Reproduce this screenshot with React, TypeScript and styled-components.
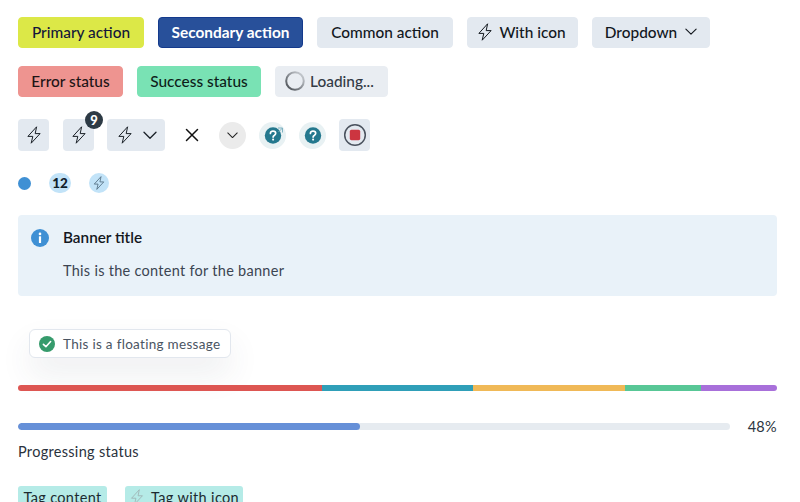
import React from "react";
import styled, { createGlobalStyle } from "styled-components";

const Global = createGlobalStyle`
  html, body { margin: 0; padding: 0; background: #fff; overflow: hidden; height: 502px; }
  body { font-family: "Lato", "Noto Sans", sans-serif; color: #12171d; -webkit-font-smoothing: antialiased; }
`;

const Page = styled.div`
  display: flex;
  flex-direction: column;
  padding: 17px 23px 0 18px;
  width: 759px;
`;

const Row = styled.div<{ $gap?: number; $mb: number }>`
  display: flex;
  align-items: center;
  gap: ${(p) => p.$gap ?? 14}px;
  margin-bottom: ${(p) => p.$mb}px;
`;

const variants: Record<string, string> = {
  primary: "background:#dce847;color:#14173a;border-color:#dce847;",
  secondary: "background:#28509a;color:#fff;border-color:#143a8c;font-weight:700;",
  common: "background:#e3e9f0;color:#12171d;border-color:#e3e9f0;",
  error: "background:#ee9490;color:#1e1416;border-color:#ee9490;",
  success: "background:#79e2b4;color:#0e1e1a;border-color:#79e2b4;",
  loading: "background:#e9edf2;color:#333b45;border-color:#e9edf2;",
};

const Button = styled.div<{ $v: keyof typeof variants; $w: number; $pr?: number; $gap?: number }>`
  box-sizing: border-box;
  display: flex;
  align-items: center;
  justify-content: center;
  gap: ${(p) => p.$gap ?? 5}px;
  width: ${(p) => p.$w}px;
  height: 31px;
  padding: 0 ${(p) => p.$pr ?? 0}px 2px 0;
  border: 1px solid;
  border-radius: 4px;
  font-size: 15.4px;
  font-weight: 500;
  white-space: nowrap;
  ${(p) => variants[p.$v]}
`;

const IconButton = styled.div<{ $w?: number; $ml?: number }>`
  position: relative;
  display: flex;
  align-items: center;
  justify-content: center;
  gap: 9px;
  width: ${(p) => p.$w ?? 31}px;
  height: 32px;
  margin-left: ${(p) => p.$ml ?? 0}px;
  border-radius: 4px;
  background: #e3e9f0;
  color: #1a2027;
`;

const Count = styled.span`
  position: absolute;
  top: -8px;
  right: -9px;
  box-sizing: border-box;
  width: 18px;
  height: 18px;
  border-radius: 50%;
  background: #2d3a45;
  color: #fff;
  font-size: 13px;
  font-weight: 900;
  display: flex;
  align-items: center;
  justify-content: center;
`;

const Plain = styled.div<{ $ml: number }>`
  display: flex;
  align-items: center;
  justify-content: center;
  width: 26px;
  height: 26px;
  margin-left: ${(p) => p.$ml}px;
`;

const Round = styled.div<{ $bg: string; $ml: number }>`
  display: flex;
  align-items: center;
  justify-content: center;
  width: 27px;
  height: 27px;
  margin-left: ${(p) => p.$ml}px;
  border-radius: 50%;
  background: ${(p) => p.$bg};
`;

const Dot = styled.span`
  width: 13px;
  height: 13px;
  border-radius: 50%;
  background: #3f90d4;
`;

const Pill = styled.span<{ $w: number }>`
  display: flex;
  align-items: center;
  justify-content: center;
  width: ${(p) => p.$w}px;
  height: 20px;
  border-radius: 10px;
  background: #c2e3f8;
  color: #10202c;
  font-size: 13.5px;
  font-weight: 900;
`;

const Banner = styled.div`
  box-sizing: border-box;
  height: 81px;
  border-radius: 4px;
  background: #e9f2f9;
  padding: 12px 13px;
  display: grid;
  grid-template-columns: 18px 1fr;
  column-gap: 14px;
  margin-bottom: 33px;
`;

const BannerIcon = styled.div`
  height: 18px;
  margin-top: 2px;
`;

const BannerTitle = styled.div`
  font-size: 15.3px;
  font-weight: 600;
  line-height: 20px;
  color: #14181d;
`;

const BannerText = styled.div`
  margin-top: 14px;
  font-size: 14.5px;
  line-height: 20px;
  color: #3c4552;
  letter-spacing: 0.28px;
`;

const Toast = styled.div`
  box-sizing: border-box;
  align-self: flex-start;
  margin-left: 11px;
  width: 202px;
  height: 29px;
  display: flex;
  align-items: center;
  gap: 8px;
  padding-left: 9px;
  border: 1px solid #e2e7ee;
  border-radius: 6px;
  background: #fff;
  font-size: 13.5px;
  color: #4a5462;
  letter-spacing: 0.3px;
  white-space: nowrap;
  box-shadow: 0 16px 32px rgba(60, 70, 90, 0.09);
  margin-bottom: 27px;
`;

const Stacked = styled.div`
  position: relative;
  display: flex;
  height: 6px;
  border-radius: 3px;
  overflow: hidden;
  margin-bottom: 31px;
`;

const Segment = styled.span<{ $w: number; $c: string }>`
  width: ${(p) => p.$w}px;
  background: ${(p) => p.$c};
`;

const ProgressRow = styled.div`
  display: flex;
  align-items: center;
  justify-content: space-between;
  height: 8px;
  margin-bottom: 12px;
`;

const Track = styled.div`
  width: 712px;
  height: 7px;
  border-radius: 4px;
  background: #e6ebf0;
  overflow: hidden;
`;

const Fill = styled.div`
  height: 100%;
  background: #6690d8;
  border-radius: 4px;
`;

const Percent = styled.span`
  font-size: 14.5px;
  color: #2c3540;
  letter-spacing: 0.3px;
`;

const Label = styled.div`
  font-size: 14.5px;
  line-height: 20px;
  color: #2a323c;
  letter-spacing: 0.3px;
  margin-bottom: 24px;
`;

const Tag = styled.div<{ $w: number }>`
  box-sizing: border-box;
  display: flex;
  align-items: center;
  justify-content: center;
  gap: 6px;
  width: ${(p) => p.$w}px;
  height: 24px;
  padding-bottom: 2px;
  border-radius: 3px;
  background: #b5ebe7;
  color: #1c2a30;
  font-size: 14.5px;
  letter-spacing: 0.35px;
  white-space: nowrap;
`;

const Bolt = ({ size = 18, color = "currentColor" }: { size?: number; color?: string }) => (
  <svg width={size} height={size} viewBox="0 0 18 18" fill="none" stroke={color} strokeWidth="1" strokeLinejoin="round">
    <path d="M11.6 .8 2.9 10.4h4.9L6.2 17.2l8.9-9.6H10.2l1.4-6.8Z" />
  </svg>
);

const Chevron = ({ w = 14, color = "currentColor" }: { w?: number; color?: string }) => (
  <svg width={w} height={w * 0.6} viewBox="0 0 14 8.4" fill="none" stroke={color} strokeWidth="1.3" strokeLinecap="round" strokeLinejoin="round">
    <path d="M1 1.2 7 7.2l6-6" />
  </svg>
);

const Spinner = () => (
  <svg width="20" height="20" viewBox="0 0 20 20" fill="none">
    <defs>
      <linearGradient id="sp" x1="0" y1="1" x2="1" y2="0">
        <stop offset="0" stopColor="#44494f" />
        <stop offset="1" stopColor="#d5d9de" />
      </linearGradient>
    </defs>
    <circle cx="10" cy="10" r="8.8" stroke="url(#sp)" strokeWidth="2" />
  </svg>
);

const Help = ({ external }: { external?: boolean }) => (
  <svg width="24" height="24" viewBox="0 0 24 24" fill="none">
    <circle cx="12" cy="12.5" r="8.2" fill="#24788e" />
    {external && <path d="M17 5h4.5v4.5M21.5 5l-4 4" stroke="#7fb2c2" strokeWidth="1" />}
    <path d="M9.4 10.4c0-1.5 1.1-2.3 2.6-2.3s2.7.8 2.7 2.2c0 1.2-.7 1.7-1.5 2.2-.7.4-1.1.8-1.1 1.6" stroke="#fff" strokeWidth="1.7" strokeLinecap="round" />
    <circle cx="12.1" cy="16.6" r="1.05" fill="#fff" />
  </svg>
);

const Stop = () => (
  <svg width="24" height="24" viewBox="0 0 24 24" fill="none">
    <circle cx="12" cy="12" r="10.3" stroke="#4a525e" strokeWidth="1.5" />
    <rect x="6.8" y="6.8" width="10.4" height="10.4" rx="1.6" fill="#cc3540" />
  </svg>
);

const Close = () => (
  <svg width="14" height="14" viewBox="0 0 14 14" fill="none" stroke="#111" strokeWidth="1.5" strokeLinecap="round">
    <path d="M1.5 1.5l11 11M12.5 1.5l-11 11" />
  </svg>
);

const Info = () => (
  <svg width="18" height="18" viewBox="0 0 18 18">
    <circle cx="9" cy="9" r="9" fill="#3f90d4" />
    <circle cx="9" cy="4.9" r="1.3" fill="#fff" />
    <rect x="7.9" y="7.2" width="2.2" height="6.8" rx=".5" fill="#fff" />
  </svg>
);

const Check = () => (
  <svg width="16" height="16" viewBox="0 0 16 16" fill="none">
    <circle cx="8" cy="8" r="8" fill="#369b6c" />
    <path d="M4.4 8.3l2.5 2.4 4.7-5.2" stroke="#fff" strokeWidth="1.6" strokeLinecap="round" strokeLinejoin="round" />
  </svg>
);

export default function App() {
  return (
    <Page>
      <Global />
      <Row $mb={18}>
        <Button $v="primary" $w={126}>Primary action</Button>
        <Button $v="secondary" $w={145}>Secondary action</Button>
        <Button $v="common" $w={136}>Common action</Button>
        <Button $v="common" $w={111} $pr={3}><Bolt />With icon</Button>
        <Button $v="common" $w={118} $gap={8}>Dropdown<Chevron w={12} /></Button>
      </Row>
      <Row $mb={22}>
        <Button $v="error" $w={105}>Error status</Button>
        <Button $v="success" $w={124}>Success status</Button>
        <Button $v="loading" $w={113} $pr={4}><Spinner />Loading...</Button>
      </Row>
      <Row $gap={0} $mb={22}>
        <IconButton><Bolt /></IconButton>
        <IconButton $ml={14}><Bolt /><Count>9</Count></IconButton>
        <IconButton $w={58} $ml={13}><Bolt /><Chevron /></IconButton>
        <Plain $ml={14}><Close /></Plain>
        <Round $bg="#ebebeb" $ml={14}><Chevron w={11} color="#222" /></Round>
        <Round $bg="#e8f1f3" $ml={13}><Help external /></Round>
        <Round $bg="#e8f1f3" $ml={13}><Help /></Round>
        <IconButton $ml={13}><Stop /></IconButton>
      </Row>
      <Row $gap={18} $mb={22}>
        <Dot />
        <Pill $w={22}>12</Pill>
        <Pill $w={20}><Bolt size={14} color="#4a6478" /></Pill>
      </Row>
      <Banner>
        <BannerIcon><Info /></BannerIcon>
        <div>
          <BannerTitle>Banner title</BannerTitle>
          <BannerText>This is the content for the banner</BannerText>
        </div>
      </Banner>
      <Toast><Check />This is a floating message</Toast>
      <Stacked>
        <Segment $w={304} $c="#dd5652" />
        <Segment $w={151} $c="#2f9fb8" />
        <Segment $w={152} $c="#f0b957" />
        <Segment $w={76} $c="#58c796" />
        <Segment $w={76} $c="#a870da" />
      </Stacked>
      <ProgressRow>
        <Track><Fill style={{ width: "48%" }} /></Track>
        <Percent>48%</Percent>
      </ProgressRow>
      <Label>Progressing status</Label>
      <Row $gap={18} $mb={0}>
        <Tag $w={89}>Tag content</Tag>
        <Tag $w={118}><Bolt size={16} color="#9fb5b5" />Tag with icon</Tag>
      </Row>
    </Page>
  );
}
